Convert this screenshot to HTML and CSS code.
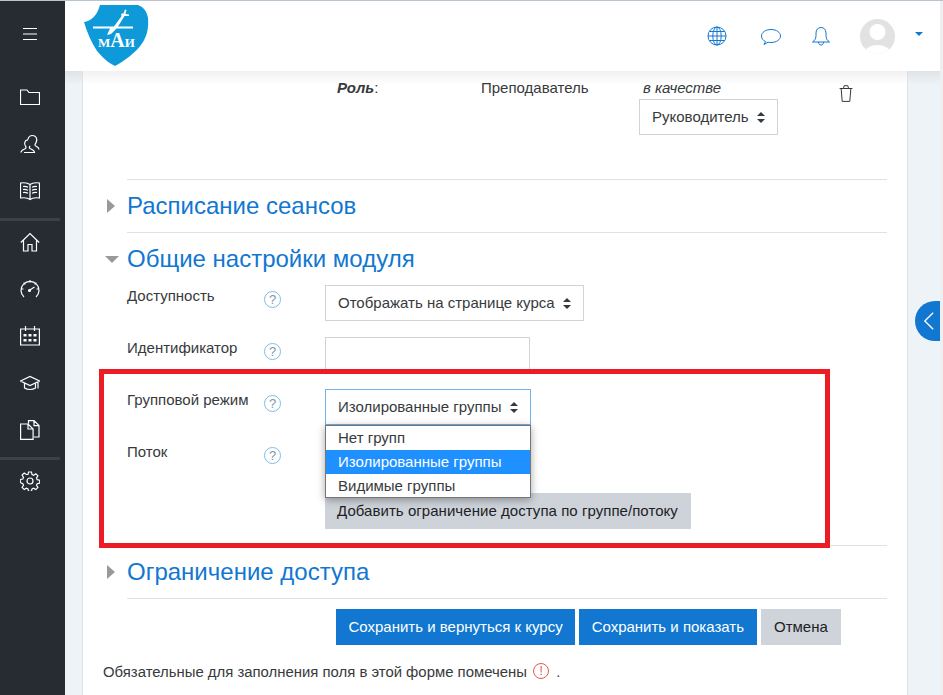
FILE: index.html
```html
<!DOCTYPE html>
<html lang="ru">
<head>
  <meta charset="UTF-8">
  <meta name="viewport" content="width=device-width, initial-scale=1">
  <title>Общие настройки модуля</title>
  <link rel="stylesheet" href="styles.css">
</head>
<body>
  <nav class="sidebar">
    <div class="nav-item">
      <svg viewBox="0 0 20 20"><path d="M3 4.500h14M3 10h14M3 15.500h14"/></svg>
    </div>
    <div class="nav-group first">
      <div class="nav-item"><svg viewBox="0 0 20 20"><path d="M.5 3h6.500l2 2.500h10.500v12H.5z"/></svg></div>
      <div class="nav-item"><svg viewBox="0 0 20 20"><path d="M1 18.500c0-2.500 3-3 4.500-4 .8-.6.6-1.600 0-2.400-1.500-2-1.300-6 2.500-6.200M8 5.500c.4-2.800 2.200-4 4.500-4 3.500 0 5 3.400 3.800 6.500-.5 1.300-1.300 2-1.300 3 0 1.600 4 1.700 4 4.500M4 18.500h10.500c0-2.500-3-3-4.500-4-1-.7-.6-1.800 0-2.500"/></svg></div>
      <div class="nav-item"><svg viewBox="0 0 20 20"><path d="M.5 2c3.500-.5 7-.5 9.500 1.500 2.500-2 6-2 9.500-1.500v15c-3.500-.5-7-.5-9.500 1.500C7.500 16.500 4 16.500.5 17zM10 3.500v15M3 5.500c1.700-.2 3.500 0 5 .8M3 8.500c1.700-.2 3.500 0 5 .8M3 11.500c1.700-.2 3.500 0 5 .8M17 5.500c-1.700-.2-3.500 0-5 .8M17 8.500c-1.700-.2-3.500 0-5 .8M17 11.500c-1.700-.2-3.500 0-5 .8"/></svg></div>
    </div>
    <div class="nav-group">
      <div class="nav-item"><svg viewBox="0 0 20 20"><path d="M.8 10.500 10 1.500l9.200 9M3.500 8.500v10.500h4.500v-6.500h4v6.500h4.500V8.500"/></svg></div>
      <div class="nav-item"><svg viewBox="0 0 20 20"><path d="M4 18a9 9 0 1 1 12 0M10 1v2.500M1 10h2.500M16.500 10h2.500M3.600 3.600l1.800 1.800M16.400 3.600l-1.800 1.800M9 11.500l5.500-3.500"/><circle cx="9.500" cy="11.500" r="1"/></svg></div>
      <div class="nav-item"><svg viewBox="0 0 20 20"><path d="M.6 3h18.800v16H.6zM5.500 0v5M14.500 0v5"/><path class="dots" d="M3.500 8h3v2.500h-3zM8.500 8h3v2.500h-3zM13.500 8h3v2.500h-3zM3.500 13h3v2.500h-3zM8.500 13h3v2.500h-3zM13.500 13h3v2.500h-3z"/></svg></div>
      <div class="nav-item"><svg viewBox="0 0 20 20"><path d="M.5 8 10 3.500 19.500 8 10 12.500zM4.500 10.500v4.500c3 2 8 2 11 0v-4.500M18 9v6.500"/></svg></div>
      <div class="nav-item"><svg viewBox="0 0 20 20"><path d="M8.500 3.500V.6h5.500l5 5v11.400h-5M14 .6v5h5M.6 4h7.500l5 5v10.400H.6zM8 4v5h5"/></svg></div>
    </div>
    <div class="nav-group">
      <div class="nav-item"><svg viewBox="0 0 20 20"><circle cx="10" cy="10" r="3"/><path d="M8.500 1h3l.5 2.500 1.600.7 2.200-1.400 2.100 2.100-1.400 2.200.7 1.600 2.500.5v3l-2.500.5-.7 1.600 1.400 2.200-2.100 2.100-2.200-1.400-1.600.7-.5 2.500h-3l-.5-2.500-1.600-.7-2.200 1.400-2.100-2.100 1.400-2.200-.7-1.600L.3 11.500v-3l2.500-.5.7-1.600-1.400-2.200 2.100-2.100 2.200 1.400L8 3.500z"/></svg></div>
    </div>
  </nav>

  <div class="main">
    <header class="topbar">
      <svg class="logo" viewBox="0 0 65 62">
        <path class="shield" d="M0 17C7 16 13 11 16 0H54C60 2 63 7 64 13 65 25 62 32 59 37 52 48 40 56 31 61 22 57 17 50 13 46 8 38 3 28 0 17z"/>
        <path class="wing" d="M9 21.500H30L38 10.500 37 10.500 37.500 8.500 39.500 8.500 41 4.500 42.500 5 41.500 9 45 9.500 45 11 40.500 11 34 21.500H49V23.500H32.500L27 29 23 30 26 23.500H9z"/>
        <text x="14" y="42">М<tspan class="tall">А</tspan>И</text>
      </svg>
      <div class="topbar-icons">
        <svg class="globe" viewBox="0 0 20 20"><circle cx="10" cy="10" r="9"/><ellipse cx="10" cy="10" rx="4.200" ry="9"/><path d="M10 1v18M1 10h18M2.500 5.500h15M2.500 14.500h15"/></svg>
        <svg class="chat" viewBox="0 0 20 20"><path d="M4.500 15.500C2 14.500.5 12.500.5 10c0-3.500 4-6.500 9.500-6.500s9.500 3 9.500 6.500-4 6.500-9.500 6.500c-1 0-2 0-3-.3L3 18.500z"/></svg>
        <svg class="bell" viewBox="0 0 20 20"><path d="M1.500 16c2-1.500 3.500-3 3.500-6.500V7c0-3.300 2-5.500 5-5.500s5 2.200 5 5.500v2.500c0 3.500 1.500 5 3.500 6.500zM7.500 16c0 4 5 4 5 0"/></svg>
        <div class="avatar">
          <svg viewBox="0 0 35 35"><circle cx="17.500" cy="13" r="8"/><path d="M3 36c1-7 8-10 14.500-10S31 29 32 36z"/></svg>
        </div>
        <span class="caret"></span>
      </div>
    </header>

    <div class="page">
      <form class="card">
        <div class="role-row">
          <span class="role-label"><b>Роль</b>:</span>
          <span class="role-value">Преподаватель</span>
          <div class="role-as">
            <i>в качестве</i>
            <div class="select">Руководитель<span class="updown"></span></div>
          </div>
          <svg class="trash" viewBox="0 0 14 17"><path d="M2.200 4l1 12.400h7.600l1-12.400M.6 3.500h12.800M4.500 3.200 5.200.7h3.600l.7 2.500"/></svg>
        </div>

        <section class="fold">
          <h3><span class="arrow closed"></span>Расписание сеансов</h3>
        </section>

        <section class="fold">
          <h3><span class="arrow open"></span>Общие настройки модуля</h3>
          <div class="field">
            <label>Доступность</label><span class="help">?</span>
            <div class="select">Отображать на странице курса<span class="updown"></span></div>
          </div>
          <div class="field">
            <label>Идентификатор</label><span class="help">?</span>
            <div class="text-input"></div>
          </div>
          <div class="field">
            <label>Групповой режим</label><span class="help">?</span>
            <div class="select-wrap">
              <div class="select focused">Изолированные группы<span class="updown"></span></div>
              <ul class="dropdown">
                <li>Нет групп</li>
                <li class="active">Изолированные группы</li>
                <li>Видимые группы</li>
              </ul>
            </div>
          </div>
          <div class="field stream">
            <label>Поток</label><span class="help">?</span>
            <div class="grey-btn">Добавить ограничение доступа по группе/потоку</div>
          </div>
        </section>

        <section class="fold last">
          <h3><span class="arrow closed"></span>Ограничение доступа</h3>
        </section>

        <div class="actions">
          <div class="btn blue">Сохранить и вернуться к курсу</div>
          <div class="btn blue">Сохранить и показать</div>
          <div class="btn grey">Отмена</div>
        </div>
        <p class="required">Обязательные для заполнения поля в этой форме помечены <span class="warn">!</span> .</p>
      </form>

      <div class="drawer-toggle">
        <svg viewBox="0 0 14 24"><path d="M12 2 2 12l10 10"/></svg>
      </div>
    </div>
  </div>

  <div class="highlight"></div>
</body>
</html>
```

FILE: styles.css
```css
* {
  margin: 0;
  padding: 0;
  box-sizing: border-box;
}
html, body {
  height: 100%;
  overflow: hidden;
}
body {
  display: flex;
  font-family: 'Liberation Sans', Arial, sans-serif;
  font-size: 15px;
  line-height: 22px;
  color: #373a3c;
  background: #efefef;
  border-top: 1px solid #b9c4ce;
}

/* left nav */
.sidebar {
  width: 65px;
  flex-shrink: 0;
  background: #272c33;
  padding-top: 9.5px;
}
.nav-item {
  width: 60px;
  height: 47px;
  display: flex;
  align-items: center;
  justify-content: center;
}
.nav-item svg {
  width: 20px;
  height: 20px;
  fill: none;
  stroke: #fff;
  stroke-width: 1.2;
}
.nav-item svg .dots {
  fill: #fff;
  stroke: none;
}
.nav-group.first {
  margin-top: 16px;
}
.nav-group + .nav-group {
  margin-top: 3px;
  border-top: 3px solid #39424a;
  width: 60px;
}
.nav-group + .nav-group .nav-item:first-child {
  margin-top: -2px;
}

/* top bar */
.main {
  width: 875px;
  flex-shrink: 0;
  display: flex;
  flex-direction: column;
  height: 694px;
}
.topbar {
  height: 70px;
  flex-shrink: 0;
  background: #fff;
  display: flex;
  justify-content: space-between;
  align-items: center;
  padding: 0 17px 0 19px;
}
.logo {
  width: 65px;
  height: 62px;
}
.logo .shield {
  fill: #0e9ad9;
}
.logo .wing {
  fill: #fff;
}
.logo text {
  font-family: 'Liberation Serif', serif;
  font-size: 13px;
  font-weight: bold;
  fill: #fff;
}
.logo .tall {
  font-size: 20px;
}
.topbar-icons {
  display: flex;
  align-items: center;
}
.topbar-icons > svg {
  width: 20px;
  height: 20px;
  fill: none;
  stroke: #1177d1;
  stroke-width: 1;
}
.topbar-icons .chat {
  margin-left: 34px;
}
.topbar-icons .bell {
  margin-left: 30px;
}
.avatar {
  width: 35px;
  height: 35px;
  border-radius: 50%;
  background: #e2e2e2;
  overflow: hidden;
  margin-left: 29px;
}
.avatar svg {
  display: block;
  fill: #fff;
}
.caret {
  width: 0;
  height: 0;
  border: 4.5px solid transparent;
  border-top-color: #1177d1;
  border-bottom: 0;
  margin-left: 20px;
  margin-bottom: 4px;
}

/* page */
.page {
  flex: 1;
  min-height: 0;
  background: linear-gradient(#dfe3e6, #edf3f7 14px);
  padding: 0 32px 0 17px;
  position: relative;
  overflow: hidden;
}
.card {
  height: 100%;
  background: linear-gradient(#f1f1f1, #fff 14px);
  border: solid #dee2e6;
  border-width: 0 1px;
  padding: 0 20px;
}

.role-row {
  height: 108px;
  display: flex;
  padding-top: 6px;
}
.role-label {
  width: 144px;
  margin-left: 234px;
}
.role-label b {
  font-style: italic;
}
.role-value {
  width: 158px;
}
.role-as i {
  display: block;
  padding-left: 4px;
}
.trash {
  width: 14px;
  height: 17px;
  margin: 8px 0 0 61px;
  fill: none;
  stroke: #373a3c;
  stroke-width: 1;
}

/* collapsible sections */
.fold {
  margin-left: 24px;
}
.fold h3 {
  height: 53px;
  border-top: 1px solid #dee2e6;
  display: flex;
  align-items: center;
  font-size: 24px;
  font-weight: normal;
  color: #1177d1;
}
.fold.last {
  margin-top: 16px;
  border-bottom: 1px solid #dee2e6;
}
.arrow {
  width: 0;
  height: 0;
  border-style: solid;
  border-color: transparent;
}
.arrow.closed {
  border-width: 7px 0 7px 8px;
  border-left-color: #999;
  margin: 0 12px 0 -20px;
}
.arrow.open {
  border-width: 7px 7px 0;
  border-top-color: #999;
  margin: 0 8px 0 -22px;
}

.field {
  display: grid;
  grid-template-columns: 137px 61px 1fr;
  align-items: start;
  margin-bottom: 16px;
}
.field.stream {
  margin-bottom: 0;
}
.help {
  width: 17px;
  height: 17px;
  margin-top: 6px;
  border: 1.5px solid #7bbde6;
  border-radius: 50%;
  display: flex;
  align-items: center;
  justify-content: center;
  font-size: 13px;
  color: #7f97a8;
}
.select {
  width: fit-content;
  height: 36px;
  display: flex;
  align-items: center;
  gap: 8px;
  padding: 0 12px;
  background: #fff;
  border: 1px solid #ced4da;
}
.select.focused {
  border-color: #72b1e8;
}
.updown {
  width: 0;
  height: 0;
  border-style: solid;
  border-color: #343a40 transparent;
  border-width: 4px 4px 0;
  margin-top: 7px;
  position: relative;
}
.updown::before {
  content: "";
  position: absolute;
  left: -4px;
  top: -11px;
  border-style: solid;
  border-color: #343a40 transparent;
  border-width: 0 4px 4px;
}
.text-input {
  width: 205px;
  height: 36px;
  background: #fff;
  border: 1px solid #ced4da;
}
.select-wrap {
  position: relative;
}
.dropdown {
  position: absolute;
  top: 36px;
  left: 0;
  width: 206px;
  height: 73px;
  list-style: none;
  background: #fff;
  border: 1px solid #767676;
  box-shadow: 0 2px 8px rgba(0, 0, 0, 0.35);
  z-index: 2;
}
.dropdown li {
  height: 24px;
  line-height: 23px;
  padding-left: 12px;
}
.dropdown li.active {
  background: #1e90ff;
  color: #fff;
}
.grey-btn {
  width: fit-content;
  height: 36px;
  line-height: 36px;
  margin-top: 52px;
  padding: 0 13px 0 12px;
  background: #ced3da;
  color: #1d2125;
  letter-spacing: 0.05px;
}

/* footer of form */
.actions {
  display: flex;
  gap: 4px;
  margin: 10px 0 16px 233px;
}
.btn {
  height: 36px;
  line-height: 36px;
  padding: 0 12.5px;
}
.btn.blue {
  background: #1177d1;
  color: #fff;
}
.btn.grey {
  padding: 0 13.5px;
  background: #ced4da;
  color: #1d2125;
}
.required {
  font-size: 14.9px;
}
.warn {
  display: inline-flex;
  align-items: center;
  justify-content: center;
  width: 16px;
  height: 16px;
  margin: 0 3px 0 2px;
  border: 1.2px solid #e4574f;
  border-radius: 50%;
  color: #e4574f;
  font-size: 12px;
  vertical-align: 2px;
}

.drawer-toggle {
  position: absolute;
  top: 230px;
  right: 0;
  width: 25px;
  height: 40px;
  background: #1177d1;
  border-radius: 20px 0 0 20px;
  display: flex;
  align-items: center;
  padding-left: 8px;
}
.drawer-toggle svg {
  width: 12px;
  height: 20px;
  fill: none;
  stroke: #fff;
  stroke-width: 1.6;
}

.highlight {
  position: absolute;
  left: 99px;
  top: 369px;
  width: 731px;
  height: 179px;
  border: 5px solid #ed1c24;
}
```
